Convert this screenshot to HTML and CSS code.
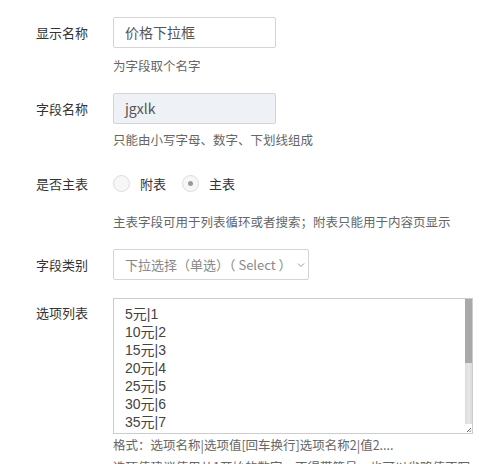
FILE: index.html
```html
<!DOCTYPE html>
<html lang="zh">
<head>
<meta charset="utf-8">
<link rel="stylesheet" href="styles.css">
</head>
<body>
<div class="form">
  <div class="row r1">
    <div class="label">显示名称</div>
    <div class="field">
      <div class="input">价格下拉框</div>
      <div class="hint h1">为字段取个名字</div>
    </div>
  </div>
  <div class="row r2">
    <div class="label">字段名称</div>
    <div class="field">
      <div class="input readonly">jgxlk</div>
      <div class="hint h2">只能由小写字母、数字、下划线组成</div>
    </div>
  </div>
  <div class="row r3">
    <div class="label">是否主表</div>
    <div class="field">
      <div class="radios">
        <span class="radio"></span><span class="rtext">附表</span>
        <span class="radio checked"></span><span class="rtext">主表</span>
      </div>
      <div class="hint h3">主表字段可用于列表循环或者搜索；附表只能用于内容页显示</div>
    </div>
  </div>
  <div class="row r4">
    <div class="label">字段类别</div>
    <div class="field">
      <div class="select">下拉选择（单选）（ Select ）<svg class="caret" width="8" height="6" viewBox="0 0 8 6"><path d="M1 1.5 L4 4.5 L7 1.5" fill="none" stroke="#999" stroke-width="1"/></svg></div>
    </div>
  </div>
  <div class="row r5">
    <div class="label">选项列表</div>
    <div class="field">
      <div class="textbox">
        <div class="lines">
          <div>5元|1</div>
          <div>10元|2</div>
          <div>15元|3</div>
          <div>20元|4</div>
          <div>25元|5</div>
          <div>30元|6</div>
          <div>35元|7</div>
        </div>
        <div class="scrollbar">
          <div class="thumb"></div>
          <div class="track"></div>
          <div class="corner"><svg width="6" height="6" viewBox="0 0 6 6"><path d="M5 1 L1 5 M5 3.5 L3.5 5" stroke="#666" stroke-width="1"/></svg></div>
        </div>
      </div>
      <div class="hint h5">格式：选项名称|选项值[回车换行]选项名称2|值2....</div>
      <div class="hint h6">选项值建议使用从1开始的数字，不得带符号，也可以省略值不写</div>
    </div>
  </div>
</div>
</body>
</html>
```
FILE: styles.css
```css
html, body {
  margin: 0;
  padding: 0;
  background: #fff;
  overflow: hidden;
}
body {
  font-family: "Noto Sans CJK SC", sans-serif;
  color: #333;
  font-size: 13px;
  width: 486px;
  height: 464px;
}
.form {
  padding-top: 17px;
}
.row {
  display: flex;
}
.label {
  width: 77px;
  padding-left: 36px;
  font-size: 13px;
  color: #333;
  line-height: 31px;
  flex: none;
}
.field {
  flex: 1;
  min-width: 0;
}
.input {
  box-sizing: border-box;
  width: 163px;
  height: 31px;
  border: 1px solid #d4d4d4;
  border-radius: 2px;
  padding: 0 11px;
  line-height: 29px;
  font-size: 14px;
  color: #555;
}
.input.readonly {
  background: #eef1f6;
}
.hint {
  font-size: 12.5px;
  color: #666;
  line-height: 18px;
  white-space: nowrap;
}
.h1 { margin-top: 9px; }
.r2 { margin-top: 18px; }
.h2 { margin-top: 7px; }
.r3 { margin-top: 19px; }
.radios {
  display: flex;
  align-items: center;
  height: 31px;
}
.radio {
  box-sizing: border-box;
  width: 17px;
  height: 17px;
  border: 1px solid #dcdcdc;
  border-radius: 50%;
  background: #f7f7f7;
  display: flex;
  align-items: center;
  justify-content: center;
}
.radio.checked::after {
  content: "";
  width: 5px;
  height: 5px;
  border-radius: 50%;
  background: #999;
}
.rtext {
  margin-left: 10px;
  margin-right: 16px;
  font-size: 13px;
  color: #333;
}
.h3 { margin-top: 14px; }
.r4 { margin-top: 18px; }
.select {
  box-sizing: border-box;
  display: inline-flex;
  align-items: center;
  width: 196px;
  height: 31px;
  border: 1px solid #d4d4d4;
  border-radius: 2px;
  padding: 0 0 0 11px;
  font-size: 13px;
  color: #888;
  white-space: nowrap;
}
.caret {
  margin-left: 5px;
}
.r5 { margin-top: 18px; }
.r5 .label {
  line-height: 30px;
}
.textbox {
  box-sizing: border-box;
  display: flex;
  width: 360px;
  height: 136px;
  border: 1px solid #ccc;
  overflow: hidden;
}
.lines {
  flex: 1;
  padding: 6px 11px;
  font-family: "Liberation Sans", "Noto Sans CJK SC", sans-serif;
  font-size: 14px;
  line-height: 18px;
  color: #444;
}
.scrollbar {
  width: 7px;
  display: flex;
  flex-direction: column;
}
.thumb {
  height: 64px;
  background: #a9a9a9;
}
.track {
  flex: 1;
  background: linear-gradient(to right, #dcdcdc, #e6e6e6 50%, #dcdcdc);
}
.corner {
  height: 9px;
  background: #fff;
  display: flex;
  align-items: flex-end;
  justify-content: flex-end;
}
.h5 { margin-top: 2px; }
.h6 { margin-top: 4px; }
```
